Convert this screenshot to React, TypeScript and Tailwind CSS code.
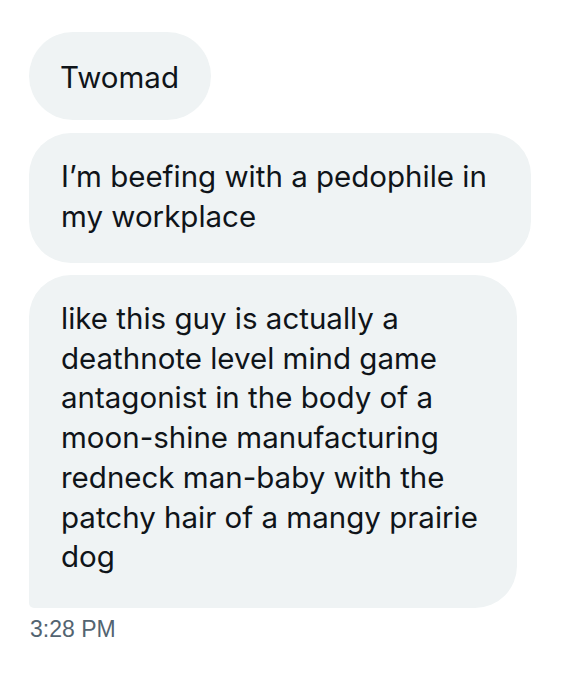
import React from "react";

const font = { fontFamily: "Inter, 'Noto Sans', sans-serif" };

export default function App() {
  return (
    <div className="w-[585px] h-[677px] bg-white flex flex-col items-start pl-[29px] pt-[32px] overflow-hidden" style={font}>
      <div className="bg-[#eff3f4] rounded-[44px] h-[88px] pl-[31px] pr-[32px] pt-[2px] flex items-center text-[29.5px] leading-[40px] text-[#0f1419]">
        Twomad
      </div>
      <div className="mt-[13px] bg-[#eff3f4] rounded-[42px] w-[502px] h-[130px] pl-[32px] pt-[24px] text-[29.5px] leading-[39.7px] text-[#0f1419]">
        I’m beefing with a pedophile in
        <br />
        my workplace
      </div>
      <div className="mt-[12px] bg-[#eff3f4] rounded-[42px] rounded-bl-[5px] w-[488px] h-[333px] pl-[32px] pt-[24px] text-[29.5px] leading-[39.7px] text-[#0f1419]">
        like this guy is actually a
        <br />
        deathnote level mind game
        <br />
        antagonist in the body of a
        <br />
        moon-shine manufacturing
        <br />
        redneck man-baby with the
        <br />
        patchy hair of a mangy prairie
        <br />
        dog
      </div>
      <div className="mt-[7px] text-[23px] leading-[28px] text-[#536471] pl-[1px]" style={{ fontFamily: "'Liberation Sans', Arial, sans-serif" }}>
        3:28 PM
      </div>
    </div>
  );
}
